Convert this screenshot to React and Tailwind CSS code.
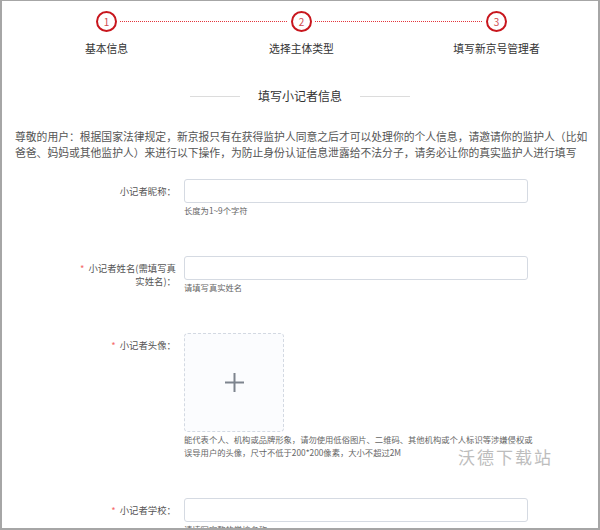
const STEPS = ["基本信息", "选择主体类型", "填写新京号管理者"];

const DOTS = "h-px bg-[repeating-linear-gradient(to_right,#e3343b_0_1px,transparent_1px_2px)]";

function Steps() {
  return (
    <div className="flex ml-[7px] pt-[10px]">
      {STEPS.map((label, i) => (
        <div key={label} className="w-[195px] flex flex-col items-center">
          <div className="flex items-center w-full">
            <div className={i === 0 ? "flex-1 mr-[3px] h-px" : `flex-1 mr-[3px] ${DOTS}`} />
            <div className="w-[21px] h-[21px] rounded-full border-2 border-[#c8161d] flex items-center justify-center text-[10px] leading-none text-[#d04a4f]">
              {i + 1}
            </div>
            <div className={i === STEPS.length - 1 ? "flex-1 ml-[3px] h-px" : `flex-1 ml-[3px] ${DOTS}`} />
          </div>
          <div className="mt-[8px] text-[10.8px] leading-[16px] text-[#333]">{label}</div>
        </div>
      ))}
    </div>
  );
}

function Label({ required, children }) {
  return (
    <div className="w-[100px] shrink-0 pt-[5.5px] text-right text-[9.4px] leading-[13px] text-[#555]">
      {required && <span className="text-[#f56c6c] mr-[4px]">*</span>}
      {children}
    </div>
  );
}

function Hint({ children }) {
  return <div className="mt-px text-[8.3px] leading-[13px] text-[#666] whitespace-nowrap">{children}</div>;
}

function TextField({ label, required, hint }) {
  return (
    <div className="flex gap-[8px]">
      <Label required={required}>{label}</Label>
      <div className="w-[344px]">
        <div className="h-[24px] rounded-[3px] border border-[#d5dae2] bg-white" />
        <Hint>{hint}</Hint>
      </div>
    </div>
  );
}

export default function App() {
  return (
    <div className="relative w-[600px] h-[530px] overflow-hidden bg-white border-t border-l-2 border-r-2 border-b-2 border-[#a6a6a6] font-['Noto_Sans_CJK_SC',sans-serif]">
      <Steps />

      {/* section title */}
      <div className="mt-[32px] flex items-center justify-center gap-[18px]">
        <div className="w-[50px] h-px bg-[#dcdcdc]" />
        <div className="text-[12px] leading-[16px] text-[#333]">填写小记者信息</div>
        <div className="w-[50px] h-px bg-[#dcdcdc]" />
      </div>

      <p className="mt-[24px] ml-[13px] text-[10.8px] leading-[16px] text-[#555] whitespace-nowrap">
        尊敬的用户：根据国家法律规定，新京报只有在获得监护人同意之后才可以处理你的个人信息，请邀请你的监护人（比如
        <br />
        爸爸、妈妈或其他监护人）来进行以下操作，为防止身份认证信息泄露给不法分子，请务必让你的真实监护人进行填写
      </p>

      {/* form */}
      <div className="mt-[19px] pl-[74px] flex flex-col gap-[39px]">
        <TextField label="小记者昵称：" hint="长度为1~9个字符" />
        <TextField
          required
          label={
            <>
              小记者姓名(需填写真
              <br />
              实姓名)：
            </>
          }
          hint="请填写真实姓名"
        />

        <div className="flex gap-[8px]">
          <Label required>小记者头像：</Label>
          <div className="w-[344px]">
            <div className="w-[100px] h-[99px] rounded-[4px] border border-dashed border-[#d3d9e2] bg-[#fbfcfe] flex items-center justify-center">
              <svg width="19" height="19" viewBox="0 0 19 19">
                <line x1="0" y1="9.5" x2="19" y2="9.5" stroke="#7d848e" strokeWidth="2" />
                <line x1="9.5" y1="0" x2="9.5" y2="19" stroke="#7d848e" strokeWidth="2" />
              </svg>
            </div>
            <Hint>
              能代表个人、机构或品牌形象，请勿使用低俗图片、二维码、其他机构或个人标识等涉嫌侵权或
              <br />
              误导用户的头像，尺寸不低于200*200像素，大小不超过2M
            </Hint>
          </div>
        </div>

        <TextField required label="小记者学校：" hint="请填写完整的学校名称" />
      </div>

      {/* watermark */}
      <div className="absolute left-[456px] top-[446px] text-[17px] leading-[20px] tracking-[2px] text-[#bdbdbd]">
        沃德下载站
      </div>
    </div>
  );
}
